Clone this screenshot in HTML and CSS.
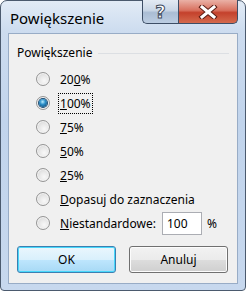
FILE: index.html
```html
<!DOCTYPE html>
<html lang="pl">

<head>
    <meta charset="UTF-8">
    <title>Powiększenie</title>
    <link rel="stylesheet" href="styles.css">
</head>

<body>
    <div class="window">
        <div class="titlebar">
            <span class="title">Powiększenie</span>
            <div class="caption-buttons">
                <span class="cap-btn help">?</span>
                <span class="cap-btn close">
                    <svg width="20" height="14" viewBox="0 0 20 14">
                        <path d="M4 2 L16 12 M16 2 L4 12" stroke="#5a1c14" stroke-width="5" stroke-linecap="square" />
                        <path d="M4 2 L16 12 M16 2 L4 12" stroke="#fff" stroke-width="3" stroke-linecap="square" />
                    </svg>
                </span>
            </div>
        </div>

        <div class="client">
            <div class="group-label">Powiększenie</div>

            <div class="options">
                <div class="option"><span class="radio"></span><span class="label">20<u>0</u>%</span></div>
                <div class="option"><span class="radio checked"></span><span class="label focused"><u>1</u>00%</span></div>
                <div class="option"><span class="radio"></span><span class="label"><u>7</u>5%</span></div>
                <div class="option"><span class="radio"></span><span class="label"><u>5</u>0%</span></div>
                <div class="option"><span class="radio"></span><span class="label"><u>2</u>5%</span></div>
                <div class="option"><span class="radio"></span><span class="label"><u>D</u>opasuj do zaznaczenia</span></div>
                <div class="option">
                    <span class="radio"></span>
                    <span class="label custom"><u>N</u>iestandardowe:</span>
                    <input class="percent-input" type="text" value="100">
                    <span class="unit">%</span>
                </div>
            </div>

            <div class="buttons">
                <button class="btn default">OK</button>
                <button class="btn">Anuluj</button>
            </div>
        </div>
    </div>
</body>

</html>
```

FILE: styles.css
```css
body {
    margin: 0;
    width: 246px;
    height: 291px;
    font-family: "Noto Sans", "Open Sans", sans-serif;
    background-color: #fff;
}

.window {
    box-sizing: border-box;
    width: 246px;
    height: 291px;
    border: 1px solid #4b5a6e;
    border-radius: 7px 7px 4px 4px;
    background: linear-gradient(to bottom, #e2ebf6 0, #cddcef 30px, #c1d4ec 120px, #c7d8ee 100%);
    display: flex;
    flex-direction: column;
}

.titlebar {
    height: 32px;
    display: flex;
    align-items: flex-start;
    padding-right: 7px;
}

.title {
    margin: 7px 0 0 9px;
    font-size: 15px;
    color: #000;
}

.caption-buttons {
    margin-left: auto;
    margin-top: -1px;
    display: flex;
}

.cap-btn {
    box-sizing: border-box;
    height: 24px;
    display: flex;
    align-items: center;
    justify-content: center;
    border: 1px solid #3d4e66;
    border-top: none;
}

.help {
    width: 36px;
    border-right: none;
    border-radius: 0 0 0 5px;
    background: linear-gradient(to bottom, #e3eaf3 0, #c9d6e6 45%, #aabdd4 55%, #bccde2 100%);
    font-family: "DejaVu Sans", sans-serif;
    font-size: 18px;
    font-weight: bold;
    color: #fff;
    -webkit-text-stroke: 1px #3f4c5e;
    line-height: 1;
}

.close {
    width: 60px;
    border-radius: 0 0 5px 0;
    background: linear-gradient(to bottom, #eab1a6 0, #d8705e 45%, #c4412c 55%, #d46a4d 100%);
}

.client {
    flex: 1;
    margin: 0 7px 6px 7px;
    border: 1px solid #98acc6;
    background-color: #f0f0f0;
    padding: 11px 8px 10px 8px;
    font-size: 12px;
    color: #000;
}

.group-label {
    display: flex;
    align-items: center;
    height: 16px;
    line-height: 16px;
}

.group-label::after {
    content: "";
    flex: 1;
    height: 1px;
    margin: 0 0 0 6px;
    background-color: #dcdfe3;
}

.options {
    margin-top: 6px;
}

.option {
    display: flex;
    align-items: center;
    height: 24px;
    padding-left: 19px;
}

.radio {
    box-sizing: border-box;
    width: 14px;
    height: 14px;
    border-radius: 50%;
    border: 1px solid #959595;
    background: radial-gradient(circle at 60% 65%, #f8f8f8 0, #e8e8e8 45%, #cfcfcf 100%);
    box-shadow: inset 0 0 0 1px #f4f4f4;
    display: flex;
    align-items: center;
    justify-content: center;
}

.radio.checked::after {
    content: "";
    width: 8px;
    height: 8px;
    border-radius: 50%;
    background: radial-gradient(circle at 45% 35%, #b8ecff 0, #2c8fc8 40%, #0b3d68 100%);
    box-shadow: 0 0 0 1px #1c4d75;
}

.label {
    margin-left: 8px;
    padding: 1px 1px;
    border: 1px dotted transparent;
}

.label.focused {
    border-color: #000;
}

.label.custom {
    width: 100px;
}

.percent-input {
    box-sizing: border-box;
    width: 40px;
    height: 23px;
    margin: 0;
    padding: 0 4px;
    border: 1px solid #abadb3;
    background: #fff;
    font: inherit;
    font-size: 12px;
    color: #000;
}

.unit {
    margin-left: 5px;
}

.buttons {
    display: flex;
    gap: 13px;
    margin-top: 11px;
}

.btn {
    box-sizing: border-box;
    width: 99px;
    height: 27px;
    border: 1px solid #707070;
    border-radius: 3px;
    background: linear-gradient(to bottom, #f2f2f2 0, #ebebeb 50%, #dddddd 51%, #cfcfcf 100%);
    font: inherit;
    font-size: 12px;
    color: #000;
    box-shadow: inset 0 0 0 1px #fcfcfc;
}

.btn.default {
    border-color: #3c7fb1;
    background: linear-gradient(to bottom, #eaf6fd 0, #d9f0fc 50%, #bee6fd 51%, #a7d9f5 100%);
    box-shadow: inset 0 0 0 1px #48d8fb;
}
```
